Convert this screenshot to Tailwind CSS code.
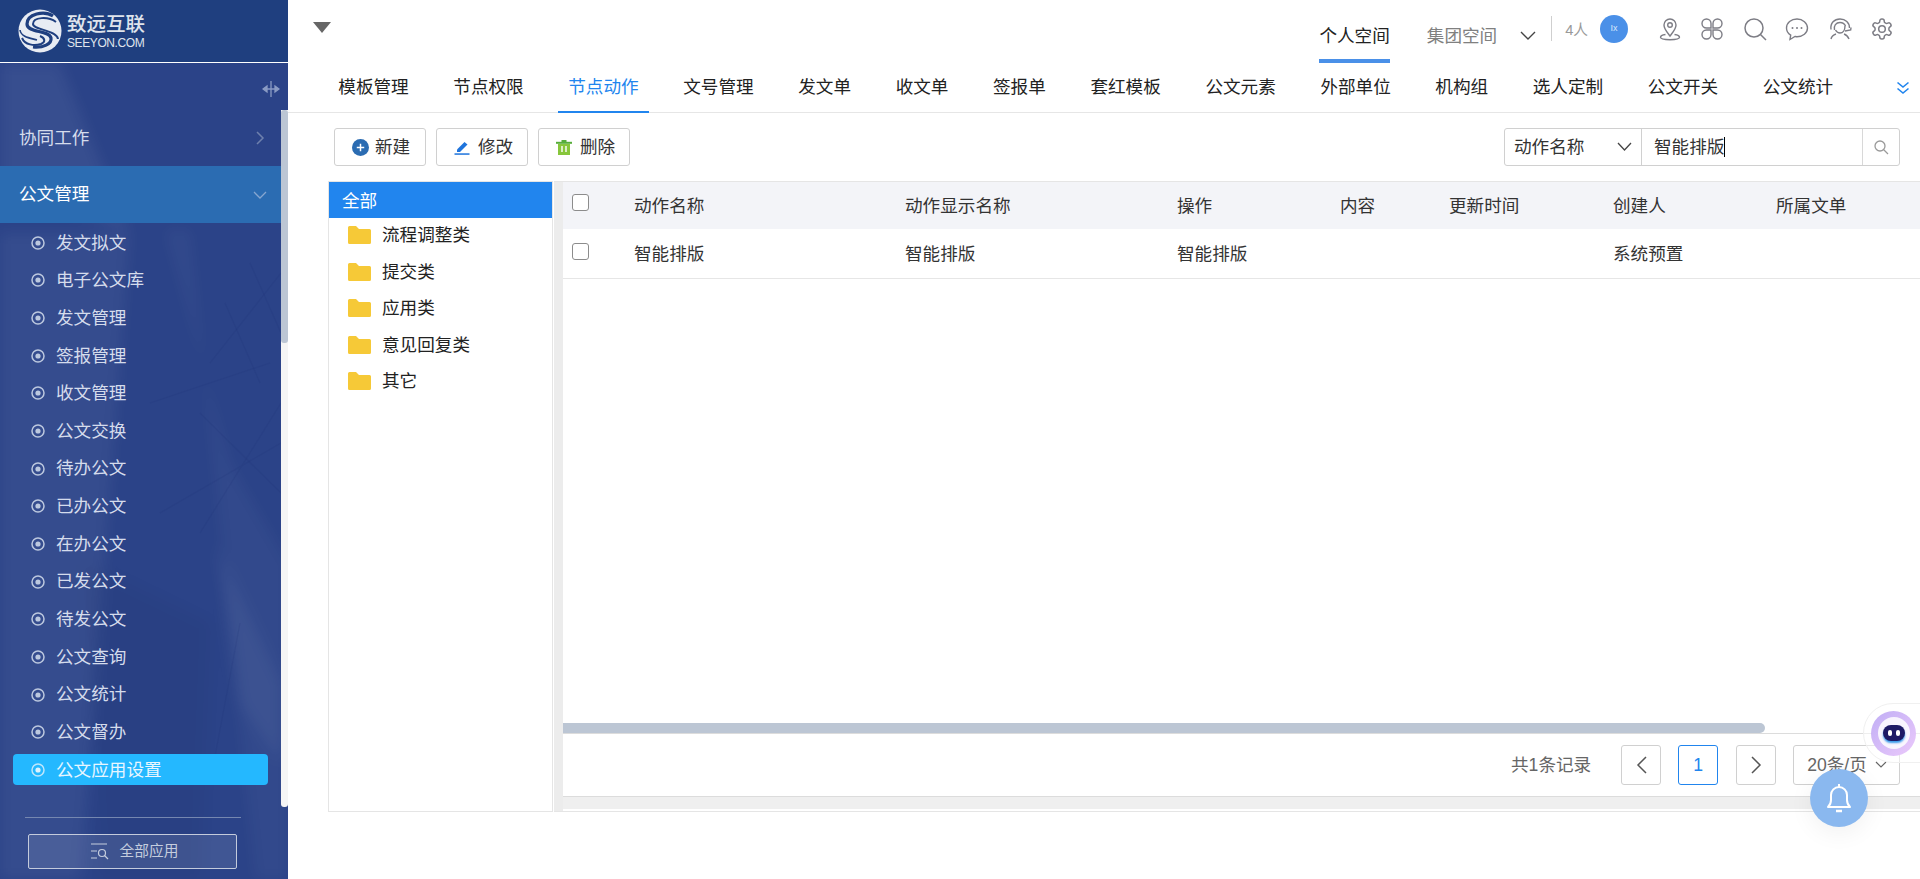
<!DOCTYPE html>
<html lang="zh-CN">
<head>
<meta charset="utf-8">
<title>公文应用设置</title>
<script src="https://cdn.jsdelivr.net/npm/@tailwindcss/browser@4"></script>
</head>
<body class="h-[879px] w-[1920px] overflow-hidden bg-white font-['Liberation_Sans','Noto_Sans_CJK_SC',sans-serif] text-[17.6px] text-[#333]">
<div class="relative flex h-[879px] w-[1920px] overflow-hidden">

  <!-- Sidebar -->
  <aside class="relative flex h-full w-[288px] shrink-0 flex-col overflow-hidden bg-[#2b4388] text-[#d5dcec]">
    <svg class="absolute left-0 top-[63px] blur-[7px]" width="288" height="816" viewBox="0 0 288 816" fill="none">
      <polygon points="0,0 60,0 130,170 0,120" fill="#fff" fill-opacity=".06"/>
      <polygon points="0,170 130,170 80,816 0,816" fill="#fff" fill-opacity=".05"/>
      <polygon points="165,167 190,167 255,816 288,816 288,500 230,400" fill="#fff" fill-opacity=".035"/>
      <polygon points="85,500 210,560 200,816 100,816" fill="#000" fill-opacity=".03"/>
      <polygon points="215,480 281,620 281,700 240,640" fill="#fff" fill-opacity=".05"/>
    </svg>
    <svg class="absolute left-0 top-[63px]" width="288" height="816" viewBox="0 0 288 816" fill="none">
      <g stroke="#1f3477" stroke-opacity=".16" stroke-width="1.2">
        <path d="M281 340L200 470M270 300L150 340M281 380L160 450M240 560L210 720M281 210L210 300"/>
        <path d="M225 240L260 320M250 200L281 270M200 350L281 430"/>
      </g>
    </svg>

    <div class="relative flex h-[63px] shrink-0 items-center border-b border-white bg-[#1f3f7f] pl-[18px]">
      <svg width="44" height="44" viewBox="0 0 44 44" fill="none">
        <circle cx="22" cy="22" r="21.5" fill="#e8ecf3"/>
        <path d="M35 7C26 1 9 5 9 15c0 9 22 6 24 14 1 6-8 10-18 9" stroke="#1f3f7f" stroke-width="3.2"/>
        <path d="M38 13C30 7 15 8 15 15c0 6 24 6 25 15" stroke="#1f3f7f" stroke-width="2"/>
        <path d="M4 29c3 7 12 8 19 6 5-2 4-6-1-8" stroke="#1f3f7f" stroke-width="2"/>
        <path d="M2 21c1 7 10 8 17 10" stroke="#1f3f7f" stroke-width="1.6"/>
      </svg>
      <div class="ml-[5px] flex flex-col text-[#dfe4ec]">
        <span class="text-[19.5px] leading-[23px] font-medium whitespace-nowrap">致远互联</span>
        <span class="text-[12px] leading-[14px] tracking-[-0.4px] whitespace-nowrap">SEEYON.COM</span>
      </div>
    </div>

    <div class="relative flex h-[47px] shrink-0 items-center justify-end pr-[8px] pt-[4px] text-[#8a9bc4]">
      <svg width="18" height="16" viewBox="0 0 18 16" fill="none" stroke="currentColor" stroke-width="1.3">
        <path d="M9 0v16M1 8h16"/><path d="M1 8l4-3v6zM17 8l-4-3v6z" fill="currentColor"/>
      </svg>
    </div>

    <div class="relative flex h-[56px] w-[281px] shrink-0 items-center justify-between pl-[19px] pr-[16px]">
      <span>协同工作</span>
      <svg width="10" height="16" viewBox="0 0 10 16" fill="none" stroke="#6e80ad" stroke-width="1.5"><path d="M2 2l6 6-6 6"/></svg>
    </div>
    <div class="relative flex h-[57px] w-[281px] shrink-0 items-center justify-between bg-[#2b6cb2] pl-[19px] pr-[14px] text-white">
      <span>公文管理</span>
      <svg width="14" height="10" viewBox="0 0 14 10" fill="none" stroke="#86a6d0" stroke-width="1.3"><path d="M1 2l6 6 6-6"/></svg>
    </div>

    <ul class="relative mt-px flex shrink-0 flex-col">
      <li class="flex h-[37.65px] items-center gap-[11px] pl-[31px]"><svg width="14" height="14" viewBox="0 0 14 14" fill="none"><circle cx="7" cy="7" r="6" stroke="#bcc8df" stroke-width="1.5"/><circle cx="7" cy="7" r="2.6" fill="#bcc8df"/></svg><span>发文拟文</span></li>
      <li class="flex h-[37.65px] items-center gap-[11px] pl-[31px]"><svg width="14" height="14" viewBox="0 0 14 14" fill="none"><circle cx="7" cy="7" r="6" stroke="#bcc8df" stroke-width="1.5"/><circle cx="7" cy="7" r="2.6" fill="#bcc8df"/></svg><span>电子公文库</span></li>
      <li class="flex h-[37.65px] items-center gap-[11px] pl-[31px]"><svg width="14" height="14" viewBox="0 0 14 14" fill="none"><circle cx="7" cy="7" r="6" stroke="#bcc8df" stroke-width="1.5"/><circle cx="7" cy="7" r="2.6" fill="#bcc8df"/></svg><span>发文管理</span></li>
      <li class="flex h-[37.65px] items-center gap-[11px] pl-[31px]"><svg width="14" height="14" viewBox="0 0 14 14" fill="none"><circle cx="7" cy="7" r="6" stroke="#bcc8df" stroke-width="1.5"/><circle cx="7" cy="7" r="2.6" fill="#bcc8df"/></svg><span>签报管理</span></li>
      <li class="flex h-[37.65px] items-center gap-[11px] pl-[31px]"><svg width="14" height="14" viewBox="0 0 14 14" fill="none"><circle cx="7" cy="7" r="6" stroke="#bcc8df" stroke-width="1.5"/><circle cx="7" cy="7" r="2.6" fill="#bcc8df"/></svg><span>收文管理</span></li>
      <li class="flex h-[37.65px] items-center gap-[11px] pl-[31px]"><svg width="14" height="14" viewBox="0 0 14 14" fill="none"><circle cx="7" cy="7" r="6" stroke="#bcc8df" stroke-width="1.5"/><circle cx="7" cy="7" r="2.6" fill="#bcc8df"/></svg><span>公文交换</span></li>
      <li class="flex h-[37.65px] items-center gap-[11px] pl-[31px]"><svg width="14" height="14" viewBox="0 0 14 14" fill="none"><circle cx="7" cy="7" r="6" stroke="#bcc8df" stroke-width="1.5"/><circle cx="7" cy="7" r="2.6" fill="#bcc8df"/></svg><span>待办公文</span></li>
      <li class="flex h-[37.65px] items-center gap-[11px] pl-[31px]"><svg width="14" height="14" viewBox="0 0 14 14" fill="none"><circle cx="7" cy="7" r="6" stroke="#bcc8df" stroke-width="1.5"/><circle cx="7" cy="7" r="2.6" fill="#bcc8df"/></svg><span>已办公文</span></li>
      <li class="flex h-[37.65px] items-center gap-[11px] pl-[31px]"><svg width="14" height="14" viewBox="0 0 14 14" fill="none"><circle cx="7" cy="7" r="6" stroke="#bcc8df" stroke-width="1.5"/><circle cx="7" cy="7" r="2.6" fill="#bcc8df"/></svg><span>在办公文</span></li>
      <li class="flex h-[37.65px] items-center gap-[11px] pl-[31px]"><svg width="14" height="14" viewBox="0 0 14 14" fill="none"><circle cx="7" cy="7" r="6" stroke="#bcc8df" stroke-width="1.5"/><circle cx="7" cy="7" r="2.6" fill="#bcc8df"/></svg><span>已发公文</span></li>
      <li class="flex h-[37.65px] items-center gap-[11px] pl-[31px]"><svg width="14" height="14" viewBox="0 0 14 14" fill="none"><circle cx="7" cy="7" r="6" stroke="#bcc8df" stroke-width="1.5"/><circle cx="7" cy="7" r="2.6" fill="#bcc8df"/></svg><span>待发公文</span></li>
      <li class="flex h-[37.65px] items-center gap-[11px] pl-[31px]"><svg width="14" height="14" viewBox="0 0 14 14" fill="none"><circle cx="7" cy="7" r="6" stroke="#bcc8df" stroke-width="1.5"/><circle cx="7" cy="7" r="2.6" fill="#bcc8df"/></svg><span>公文查询</span></li>
      <li class="flex h-[37.65px] items-center gap-[11px] pl-[31px]"><svg width="14" height="14" viewBox="0 0 14 14" fill="none"><circle cx="7" cy="7" r="6" stroke="#bcc8df" stroke-width="1.5"/><circle cx="7" cy="7" r="2.6" fill="#bcc8df"/></svg><span>公文统计</span></li>
      <li class="flex h-[37.65px] items-center gap-[11px] pl-[31px]"><svg width="14" height="14" viewBox="0 0 14 14" fill="none"><circle cx="7" cy="7" r="6" stroke="#bcc8df" stroke-width="1.5"/><circle cx="7" cy="7" r="2.6" fill="#bcc8df"/></svg><span>公文督办</span></li>
      <li class="flex h-[37.65px] items-center pl-[13px]">
        <div class="flex h-[31px] w-[255px] items-center gap-[11px] rounded-[4px] bg-[#24b8ff] pl-[18px] text-[#e8f6ff]"><svg width="14" height="14" viewBox="0 0 14 14" fill="none"><circle cx="7" cy="7" r="6" stroke="#bfe6fb" stroke-width="1.5"/><circle cx="7" cy="7" r="2.6" fill="#dff3fd"/></svg><span>公文应用设置</span></div>
      </li>
    </ul>

    <div class="relative ml-[25px] mt-[28px] h-px w-[216px] shrink-0 bg-[#7587b0]"></div>
    <div class="relative ml-[28px] mt-[16px] flex h-[35px] w-[209px] shrink-0 items-center justify-center gap-[11px] rounded-[2px] border border-[#c4cbdc] bg-white/10 pl-[3px] text-[14.7px] text-[#c5cdde]">
      <svg width="19" height="18" viewBox="0 0 19 18" fill="none" stroke="currentColor" stroke-width="1.2"><path d="M1 2h16M1 9h6M1 16h6"/><circle cx="12" cy="11" r="3.5"/><path d="M14.5 13.5L18 17"/></svg>
      <span>全部应用</span>
    </div>

    <!-- scrollbar -->
    <div class="absolute left-[281px] top-[110px] h-[697px] w-[7px] rounded-b-[3px] bg-[#f5f5f5]">
      <div class="h-[233px] w-[7px] rounded-[3px] bg-[#bcc6d4]"></div>
    </div>
  </aside>

  <!-- Main -->
  <main class="flex min-w-0 flex-1 flex-col">
    <!-- Top header -->
    <header class="flex h-[63px] shrink-0 items-start pr-[26px]">
      <div class="ml-[25px] mt-[22px] h-0 w-0 border-x-[9px] border-t-[11px] border-x-transparent border-t-[#666]"></div>
      <div class="ml-auto flex h-[63px] items-center">
        <span class="flex h-[63px] items-center border-b-4 border-[#4a90e8] pt-[14px] text-[#222] whitespace-nowrap">个人空间</span>
        <span class="ml-[37px] pt-[10px] text-[#808080] whitespace-nowrap">集团空间</span>
        <svg class="ml-[23px] mt-[8px]" width="16" height="10" viewBox="0 0 16 10" fill="none" stroke="#444" stroke-width="1.4"><path d="M1 1l7 7 7-7"/></svg>
        <div class="mb-[6px] ml-[15px] h-[25px] w-px bg-[#cfcfcf]"></div>
        <span class="mb-[2px] ml-[13px] text-[14.7px] text-[#999] whitespace-nowrap">4人</span>
        <div class="mb-[6px] ml-[12px] flex h-[28px] w-[28px] items-center justify-center rounded-full bg-[#4a90e8] text-[9px] text-[#d8e8fb]">Ix</div>
        <div class="mb-[6px] ml-[30px] flex items-center gap-[18.4px] text-[#7d7d85]">
          <svg width="24" height="24" viewBox="0 0 24 24" fill="none" stroke="currentColor" stroke-width="1.4"><path d="M12 19c-3-4-6-7-6-11a6 6 0 0 1 12 0c0 4-3 7-6 11z"/><circle cx="12" cy="8" r="2.3"/><path d="M7.5 17.5C4 18 2.5 19 2.5 20.3c0 1.6 4 2.4 9.500 2.400s9.500-.8 9.500-2.400c0-1.300-1.500-2.300-5-2.800"/></svg>
          <svg width="24" height="24" viewBox="0 0 24 24" fill="none" stroke="currentColor" stroke-width="1.4"><path d="M11 11H6.500A4.500 4.500 0 1 1 11 6.500z"/><path d="M13 11h4.500A4.500 4.500 0 1 0 13 6.500z"/><path d="M11 13H6.500A4.500 4.500 0 1 0 11 17.500z"/><path d="M13 13h4.500A4.500 4.500 0 1 1 13 17.500z"/></svg>
          <svg width="24" height="24" viewBox="0 0 24 24" fill="none" stroke="currentColor" stroke-width="1.5"><circle cx="11" cy="11" r="9"/><path d="M17.500 17.500L23 23"/></svg>
          <svg width="24" height="24" viewBox="0 0 24 24" fill="none" stroke="currentColor" stroke-width="1.4"><path d="M12 2C6.200 2 1.500 5.900 1.500 11c0 3 1.600 5.500 4.200 7.100L5 22.500l5-3c.7.1 1.300.2 2 .2 5.800 0 10.500-3.800 10.500-8.700S17.800 2 12 2z"/><circle cx="7.500" cy="11" r="1" fill="currentColor" stroke="none"/><circle cx="12" cy="11" r="1" fill="currentColor" stroke="none"/><circle cx="16.500" cy="11" r="1" fill="currentColor" stroke="none"/></svg>
          <svg width="24" height="24" viewBox="0 0 24 24" fill="none" stroke="currentColor" stroke-width="1.4"><path d="M3 12.500C2 6 6.500 2 12 2s9.500 3.500 9.500 9"/><path d="M6.500 13C5.500 8.500 8 5.500 12 5.500c2.500 0 4.500 1.200 5.500 3.500"/><path d="M17 9c0 4-2 7-5 7-2 0-3.500-1.200-4.500-3"/><path d="M23 10.500l-.3 2.500-5.700 1"/><path d="M8 17c-2.500.8-4.500 2.500-5 5M16 17c2.500.8 4 2.500 5 5"/></svg>
          <svg width="24" height="24" viewBox="0 0 24 24" fill="none" stroke="currentColor" stroke-width="1.5"><path d="M12.220 2h-.44a2 2 0 0 0-2 2v.18a2 2 0 0 1-1 1.730l-.43.25a2 2 0 0 1-2 0l-.15-.08a2 2 0 0 0-2.730.73l-.22.38a2 2 0 0 0 .73 2.730l.15.1a2 2 0 0 1 1 1.720v.51a2 2 0 0 1-1 1.740l-.15.09a2 2 0 0 0-.73 2.730l.22.38a2 2 0 0 0 2.730.73l.15-.08a2 2 0 0 1 2 0l.43.25a2 2 0 0 1 1 1.730V20a2 2 0 0 0 2 2h.44a2 2 0 0 0 2-2v-.18a2 2 0 0 1 1-1.730l.43-.25a2 2 0 0 1 2 0l.15.08a2 2 0 0 0 2.730-.73l.22-.39a2 2 0 0 0-.73-2.730l-.15-.08a2 2 0 0 1-1-1.740v-.5a2 2 0 0 1 1-1.740l.15-.09a2 2 0 0 0 .73-2.730l-.22-.38a2 2 0 0 0-2.730-.73l-.15.08a2 2 0 0 1-2 0l-.43-.25a2 2 0 0 1-1-1.730V4a2 2 0 0 0-2-2z"/><circle cx="12" cy="12" r="3.300"/></svg>
        </div>
      </div>
    </header>

    <!-- Tabs -->
    <nav class="flex h-[50px] shrink-0 items-stretch border-b border-[#e6e6e6] pl-[28px] pr-[10px] text-[#222]">
      <a class="mx-[12.3px] flex items-center px-[10px] whitespace-nowrap">模板管理</a>
      <a class="mx-[12.3px] flex items-center px-[10px] whitespace-nowrap">节点权限</a>
      <a class="mx-[12.3px] -mb-px flex items-center border-b-2 border-[#2185ee] px-[10px] text-[#2185ee] whitespace-nowrap">节点动作</a>
      <a class="mx-[12.3px] flex items-center px-[10px] whitespace-nowrap">文号管理</a>
      <a class="mx-[12.3px] flex items-center px-[10px] whitespace-nowrap">发文单</a>
      <a class="mx-[12.3px] flex items-center px-[10px] whitespace-nowrap">收文单</a>
      <a class="mx-[12.3px] flex items-center px-[10px] whitespace-nowrap">签报单</a>
      <a class="mx-[12.3px] flex items-center px-[10px] whitespace-nowrap">套红模板</a>
      <a class="mx-[12.3px] flex items-center px-[10px] whitespace-nowrap">公文元素</a>
      <a class="mx-[12.3px] flex items-center px-[10px] whitespace-nowrap">外部单位</a>
      <a class="mx-[12.3px] flex items-center px-[10px] whitespace-nowrap">机构组</a>
      <a class="mx-[12.3px] flex items-center px-[10px] whitespace-nowrap">选人定制</a>
      <a class="mx-[12.3px] flex items-center px-[10px] whitespace-nowrap">公文开关</a>
      <a class="mx-[12.3px] flex items-center px-[10px] whitespace-nowrap">公文统计</a>
      <div class="ml-auto flex items-center">
        <svg width="14" height="14" viewBox="0 0 14 14" fill="none" stroke="#2185ee" stroke-width="1.6"><path d="M1.500 1.500L7 6l5.500-4.500M1.500 7.500L7 12l5.500-4.500"/></svg>
      </div>
    </nav>

    <!-- Toolbar -->
    <div class="flex h-[68px] shrink-0 items-start pl-[46px] pr-[20px] pt-[15px]">
      <button class="flex h-[38px] w-[92px] items-center gap-[6px] rounded-[3px] border border-[#d0d0d0] pl-[17px]">
        <svg width="17" height="17" viewBox="0 0 16 16"><circle cx="8" cy="8" r="8" fill="#2b6cb2"/><path d="M8 4.500v7M4.500 8h7" stroke="#fff" stroke-width="1.400"/></svg>
        <span>新建</span>
      </button>
      <button class="ml-[10px] flex h-[38px] w-[92px] items-center gap-[8px] rounded-[3px] border border-[#d0d0d0] pl-[17px]">
        <svg width="16" height="16" viewBox="0 0 16 16"><path d="M3 10.500L10.500 3l3 2.500L6 13H3z" fill="#1f74dc"/><rect x="0.500" y="14.300" width="15" height="1.500" fill="#1f74dc"/></svg>
        <span>修改</span>
      </button>
      <button class="ml-[10px] flex h-[38px] w-[92px] items-center gap-[8px] rounded-[3px] border border-[#d0d0d0] pl-[17px]">
        <svg width="16" height="16" viewBox="0 0 16 16"><rect x="0" y="2.800" width="16" height="2" fill="#56ad3a"/><rect x="5.500" y="1" width="5" height="2" fill="#56ad3a"/><path d="M2 5h12v11H2z" fill="#87c63b"/><path d="M6 7v6M10 7v6" stroke="#fff" stroke-width="1.400"/></svg>
        <span>删除</span>
      </button>
      <div class="ml-auto flex h-[38px] w-[396px] items-stretch rounded-[3px] border border-[#d0d0d0]">
        <div class="flex w-[137px] items-center justify-between border-r border-[#d0d0d0] pl-[9px] pr-[9px] text-[#333]">
          <span>动作名称</span>
          <svg width="15" height="10" viewBox="0 0 15 10" fill="none" stroke="#444" stroke-width="1.300"><path d="M1 1l6.500 7L14 1"/></svg>
        </div>
        <div class="flex flex-1 items-center pl-[12px] text-[#333]">
          <span>智能排版</span><span class="h-[20px] w-px bg-black"></span>
        </div>
        <div class="flex w-[37px] items-center justify-center border-l border-[#d8d8d8]">
          <svg width="15" height="15" viewBox="0 0 15 15" fill="none" stroke="#9a9a9a" stroke-width="1.300"><circle cx="6" cy="6" r="5"/><path d="M9.500 9.500L14 14"/></svg>
        </div>
      </div>
    </div>

    <!-- Content -->
    <section class="ml-[40px] flex h-[631px] shrink-0 items-stretch">
      <!-- Tree -->
      <div class="h-full w-[225px] shrink-0 border border-[#e5e5e5] text-[#222]">
        <div class="flex h-[36px] items-center bg-[#2185ee] pl-[13px] pt-[3px] text-white">全部</div>
        <ul class="-mt-px flex flex-col">
          <li class="flex h-[36.5px] items-center gap-[11px] pl-[19px]"><svg width="23" height="18" viewBox="0 0 23 18"><path d="M1.500 0h6.500l3 3h10.500a1.500 1.500 0 0 1 1.500 1.500V16.500a1.500 1.500 0 0 1-1.500 1.500h-20a1.500 1.500 0 0 1-1.500-1.500v-15A1.500 1.500 0 0 1 1.500 0z" fill="#f6c937"/></svg><span>流程调整类</span></li>
          <li class="flex h-[36.5px] items-center gap-[11px] pl-[19px]"><svg width="23" height="18" viewBox="0 0 23 18"><path d="M1.500 0h6.500l3 3h10.500a1.500 1.500 0 0 1 1.500 1.500V16.500a1.500 1.500 0 0 1-1.500 1.500h-20a1.500 1.500 0 0 1-1.500-1.500v-15A1.500 1.500 0 0 1 1.500 0z" fill="#f6c937"/></svg><span>提交类</span></li>
          <li class="flex h-[36.5px] items-center gap-[11px] pl-[19px]"><svg width="23" height="18" viewBox="0 0 23 18"><path d="M1.500 0h6.500l3 3h10.500a1.500 1.500 0 0 1 1.500 1.500V16.500a1.500 1.500 0 0 1-1.500 1.500h-20a1.500 1.500 0 0 1-1.500-1.500v-15A1.500 1.500 0 0 1 1.500 0z" fill="#f6c937"/></svg><span>应用类</span></li>
          <li class="flex h-[36.5px] items-center gap-[11px] pl-[19px]"><svg width="23" height="18" viewBox="0 0 23 18"><path d="M1.500 0h6.500l3 3h10.500a1.500 1.500 0 0 1 1.500 1.500V16.500a1.500 1.500 0 0 1-1.500 1.500h-20a1.500 1.500 0 0 1-1.500-1.500v-15A1.500 1.500 0 0 1 1.500 0z" fill="#f6c937"/></svg><span>意见回复类</span></li>
          <li class="flex h-[36.5px] items-center gap-[11px] pl-[19px]"><svg width="23" height="18" viewBox="0 0 23 18"><path d="M1.500 0h6.500l3 3h10.500a1.500 1.500 0 0 1 1.500 1.500V16.500a1.500 1.500 0 0 1-1.500 1.500h-20a1.500 1.500 0 0 1-1.500-1.500v-15A1.500 1.500 0 0 1 1.500 0z" fill="#f6c937"/></svg><span>其它</span></li>
        </ul>
      </div>
      <!-- Gutter -->
      <div class="ml-[1px] h-full w-[9px] shrink-0 border-y border-[#e5e5e5] bg-[#ececec]"></div>
      <!-- Table -->
      <div class="flex h-full min-w-0 flex-1 flex-col border-y border-[#e5e5e5]">
        <div class="grid h-[47px] shrink-0 grid-cols-[71px_271px_272px_163px_109px_164px_163px_1fr] items-center bg-[#f3f4f8] pt-[2px] text-[#333]">
          <div class="pb-[9px] pl-[9px]"><span class="block h-[17px] w-[17px] rounded-[3px] border-[1.5px] border-[#8c8c8c] bg-white"></span></div>
          <div>动作名称</div><div>动作显示名称</div><div>操作</div><div>内容</div><div>更新时间</div><div>创建人</div><div>所属文单</div>
        </div>
        <div class="grid h-[50px] shrink-0 grid-cols-[71px_271px_272px_163px_109px_164px_163px_1fr] items-center border-b border-[#e6e6e6] pt-[2px] text-[#333]">
          <div class="pb-[7px] pl-[9px]"><span class="block h-[17px] w-[17px] rounded-[3px] border-[1.5px] border-[#8c8c8c] bg-white"></span></div>
          <div>智能排版</div><div>智能排版</div><div>智能排版</div><div></div><div></div><div>系统预置</div><div></div>
        </div>
        <div class="min-h-0 flex-1"></div>
        <div class="h-[10px] w-[1202px] shrink-0 rounded-r-[5px] bg-[#bcc6d4]"></div>
        <div class="flex h-[64px] shrink-0 items-center border-y border-[#dcdcdc] pl-[948px] text-[#666]">
          <span class="whitespace-nowrap">共1条记录</span>
          <button class="ml-[30px] flex h-[40px] w-[40px] items-center justify-center rounded-[3px] border border-[#d0d0d0]"><svg width="11" height="18" viewBox="0 0 11 18" fill="none" stroke="#555" stroke-width="1.500"><path d="M10 1L2 9l8 8"/></svg></button>
          <button class="ml-[17px] flex h-[40px] w-[40px] items-center justify-center rounded-[3px] border border-[#2185ee] text-[#2185ee]">1</button>
          <button class="ml-[18px] flex h-[40px] w-[40px] items-center justify-center rounded-[3px] border border-[#d0d0d0]"><svg width="11" height="18" viewBox="0 0 11 18" fill="none" stroke="#555" stroke-width="1.500"><path d="M1 1l8 8-8 8"/></svg></button>
          <button class="ml-[17px] flex h-[40px] w-[107px] items-center gap-[8px] rounded-[3px] border border-[#d0d0d0] pl-[13px] whitespace-nowrap">20条/页<svg width="12" height="8" viewBox="0 0 12 8" fill="none" stroke="#666" stroke-width="1.200"><path d="M1 1l5 5 5-5"/></svg></button>
        </div>
        <div class="h-[12px] shrink-0 bg-[#efefef]"></div>
        <div class="h-[2px] shrink-0 bg-white"></div>
      </div>
    </section>
  </main>

  <!-- Floating robot -->
  <div class="absolute left-[1863px] top-[703px] flex h-[60px] w-[80px] items-center rounded-l-[30px] border border-[#f0f0f0] bg-white/50 pl-[7px]">
    <div class="relative flex h-[45px] w-[45px] items-center justify-center rounded-full bg-[linear-gradient(135deg,#c0aef5,#ebc9fb)]">
      <div class="flex h-[32px] w-[32px] items-center justify-center rounded-full bg-white/85">
        <div class="flex h-[16px] w-[22px] items-center justify-center gap-[4px] rounded-[8px] bg-[#1e1a66] shadow-[0_2px_2px_#3b9bea]">
          <span class="h-[6px] w-[4px] rounded-full bg-white"></span>
          <span class="h-[6px] w-[4px] rounded-full bg-white"></span>
        </div>
      </div>
    </div>
  </div>

  <!-- Floating bell -->
  <div class="absolute left-[1810px] top-[769px] flex h-[58px] w-[58px] items-center justify-center rounded-full bg-[#8ab8ef] shadow-[0_6px_24px_rgba(0,0,0,0.06)]">
    <svg width="26" height="30" viewBox="0 0 26 30" fill="none" stroke="#fff" stroke-width="2"><path d="M2 24c2-2 3-4 3-7v-5a8 8 0 0 1 16 0v5c0 3 1 5 3 7z" stroke-linejoin="round"/><path d="M13 1v3"/><path d="M10 28h6" stroke-width="2.500"/></svg>
  </div>
</div>
</body>
</html>
